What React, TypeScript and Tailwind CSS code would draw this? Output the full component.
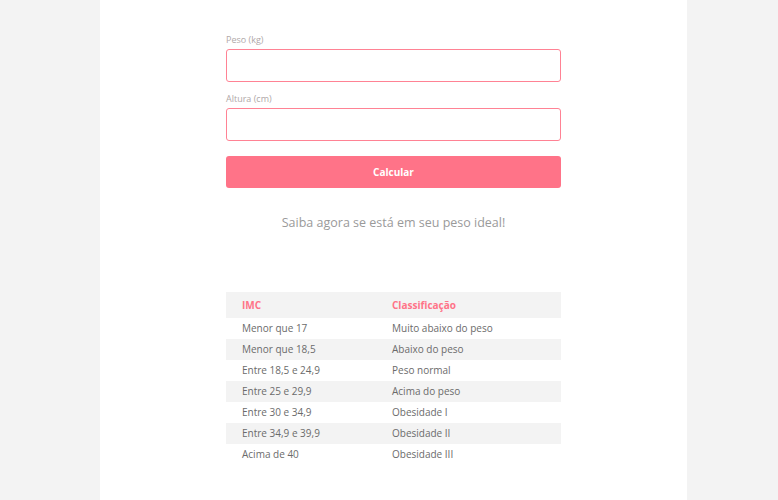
const rows: [string, string][] = [
  ["Menor que 17", "Muito abaixo do peso"],
  ["Menor que 18,5", "Abaixo do peso"],
  ["Entre 18,5 e 24,9", "Peso normal"],
  ["Entre 25 e 29,9", "Acima do peso"],
  ["Entre 30 e 34,9", "Obesidade I"],
  ["Entre 34,9 e 39,9", "Obesidade II"],
  ["Acima de 40", "Obesidade III"],
];

export default function App() {
  return (
    <main className="min-h-[500px] bg-[#f3f3f3] font-['Open_Sans',sans-serif]">
      <div className="ml-[100px] w-[587px] min-h-[500px] bg-white px-[126px] pt-[33px]">
        <form className="flex flex-col" onSubmit={(e) => e.preventDefault()}>
          <label className="text-[9px] leading-[13px] text-[#b0a8a8] mb-[3px]">Peso (kg)</label>
          <input
            type="text"
            className="h-[33px] w-full rounded-[3px] border border-[#ff8294] outline-none px-2 text-sm"
          />
          <label className="mt-[10px] text-[9px] leading-[13px] text-[#b0a8a8] mb-[3px]">Altura (cm)</label>
          <input
            type="text"
            className="h-[33px] w-full rounded-[3px] border border-[#ff8294] outline-none px-2 text-sm"
          />
          <button
            type="submit"
            className="mt-[15px] h-[32px] w-full rounded-[3px] bg-[#ff7388] text-white text-[10px] font-bold"
          >
            Calcular
          </button>
        </form>

        <p className="mt-[25px] text-center text-[12.5px] leading-[20px] text-[#9a9a9a]">
          Saiba agora se está em seu peso ideal!
        </p>

        <table className="mt-[59px] w-full border-collapse text-[10px] text-[#6b6b6b]">
          <thead>
            <tr className="bg-[#f3f3f3] h-[26px]">
              <th className="pl-4 text-left font-bold text-[#ff7388] w-[166px]">IMC</th>
              <th className="text-left font-bold text-[#ff7388]">Classificação</th>
            </tr>
          </thead>
          <tbody>
            {rows.map(([imc, cls], i) => (
              <tr key={imc} className={i % 2 === 1 ? "bg-[#f3f3f3] h-[21px]" : "h-[21px]"}>
                <td className="pl-4">{imc}</td>
                <td>{cls}</td>
              </tr>
            ))}
          </tbody>
        </table>
      </div>
    </main>
  );
}
